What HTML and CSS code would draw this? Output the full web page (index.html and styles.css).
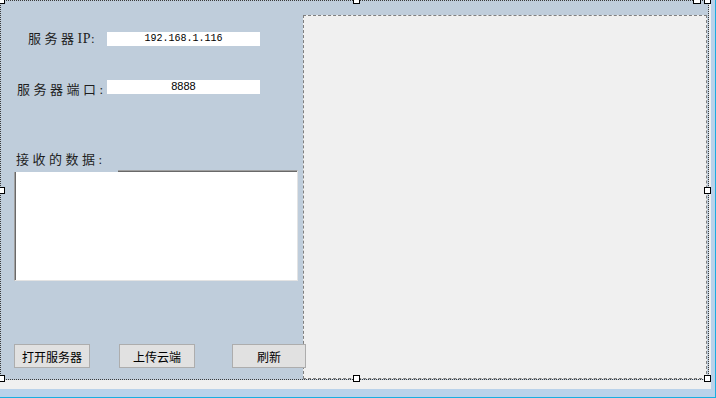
FILE: index.html
```html
<!DOCTYPE html>
<html>
<head>
  <meta charset="utf-8">
  <title>服务器</title>
  <link rel="stylesheet" href="styles.css">
</head>
<body>
  <div class="window">
    <div class="canvas">
      <div class="form">
        <div class="left">
          <div class="field field-ip">
            <span class="field-label">服务器<span class="latin">IP</span>:</span>
            <div class="line-edit line-edit-ip">192.168.1.116</div>
          </div>
          <div class="field field-port">
            <span class="field-label">服务器端口:</span>
            <div class="line-edit line-edit-port">8888</div>
          </div>
          <div class="recv-label">接收的数据:</div>
          <div class="text-edit"></div>
          <div class="buttons">
            <button type="button">打开服务器</button>
            <button type="button">上传云端</button>
            <button type="button">刷新</button>
          </div>
        </div>
        <div class="panel"></div>

        <span class="corner-tab"></span>
        <span class="handle handle-tl"></span>
        <span class="handle handle-tm"></span>
        <span class="handle handle-tr"></span>
        <span class="handle handle-ml"></span>
        <span class="handle handle-mr"></span>
        <span class="handle handle-bl"></span>
        <span class="handle handle-bm"></span>
        <span class="handle handle-br"></span>
      </div>
    </div>
  </div>
</body>
</html>
```

FILE: styles.css
```css
body {
  margin: 0;
  font-family: "Liberation Serif", "Noto Sans CJK SC", serif;
}

.window {
  width: 716px;
  height: 398px;
  box-sizing: border-box;
  background-color: #b9d2ea;
  border-right: 1px solid #1aaee0;
  border-bottom: 1px solid #1aaee0;
}

.canvas {
  width: 711px;
  height: 389px;
  background-color: #f0f0f0;
}

.form {
  position: relative;
  display: flex;
  width: 709px;
  height: 380px;
  box-sizing: border-box;
  border: 1px dotted #3a3a3a;
  background-color: #bfcddb;
}

.left {
  flex: none;
  display: flex;
  flex-direction: column;
  width: 302px;
  padding-top: 31px;
  box-sizing: border-box;
}

.field {
  display: grid;
  grid-template-columns: 106px 153px;
  align-items: start;
  height: 14px;
}

.field-port {
  margin-top: 34px;
}

.field-label {
  font-size: 13px;
  line-height: 16px;
  letter-spacing: 3.5px;
  color: #1e1e1e;
  white-space: nowrap;
}

.field-label .latin {
  font-size: 14px;
  letter-spacing: 0.5px;
}

.field-ip .field-label {
  padding-left: 27px;
  margin-top: -1px;
}

.field-port .field-label {
  padding-left: 16px;
  margin-top: 2px;
}

.line-edit {
  height: 14px;
  background-color: #fff;
  text-align: center;
  color: #000;
}

.line-edit-ip {
  font-family: "Liberation Mono", monospace;
  font-size: 10px;
  line-height: 14px;
}

.line-edit-port {
  font-family: "Liberation Sans", sans-serif;
  font-size: 11px;
  line-height: 13px;
}

.recv-label {
  position: relative;
  z-index: 1;
  width: 104px;
  height: 22px;
  margin: 56px 0 -2px 13px;
  padding: 2px 0 0 2px;
  box-sizing: border-box;
  background-color: #bfcddb;
  font-size: 13px;
  line-height: 16px;
  letter-spacing: 3.5px;
  color: #1e1e1e;
  white-space: nowrap;
}

.text-edit {
  width: 284px;
  height: 111px;
  margin-left: 13px;
  box-sizing: border-box;
  background-color: #fff;
  border-top: 1px solid #a0a0a0;
  border-left: 1px solid #a0a0a0;
  border-right: 1px solid #e3e3e3;
  border-bottom: 1px solid #e3e3e3;
  box-shadow: inset 1px 1px 0 #696969;
}

.buttons {
  display: grid;
  grid-template-columns: 105px 113px 74px;
  margin: 63px 0 0 13px;
}

.buttons button {
  position: relative;
  z-index: 1;
  width: 76px;
  height: 24px;
  padding: 0;
  border: 1px solid #adadad;
  border-radius: 0;
  background-color: #e1e1e1;
  font-family: "Noto Sans CJK SC", sans-serif;
  font-size: 12px;
  color: #000;
}

.buttons button:last-child {
  width: 74px;
}

.panel {
  flex: 1;
  margin: 14px 1px 0 0;
  background-color: #f0f0f0;
  border: 1px dashed #7f7f7f;
}

/* designer selection handles */
.handle {
  position: absolute;
  z-index: 2;
  width: 5px;
  height: 5px;
  border: 1px solid #000;
  background-color: #fff;
}

.handle-tl, .handle-tm, .handle-tr { top: -4px; }
.handle-ml, .handle-mr { top: calc(50% - 3px); }
.handle-bl, .handle-bm, .handle-br { top: calc(100% - 4px); }
.handle-tl, .handle-ml, .handle-bl { left: -3px; }
.handle-tm, .handle-bm { left: calc(50% - 2px); }
.handle-tr, .handle-mr, .handle-br { left: calc(100% - 4px); }

.corner-tab {
  position: absolute;
  z-index: 2;
  left: 692px;
  top: -3px;
  width: 6px;
  height: 5px;
  border: 1px solid #000;
  border-top: none;
  background-color: #fff;
}
```
